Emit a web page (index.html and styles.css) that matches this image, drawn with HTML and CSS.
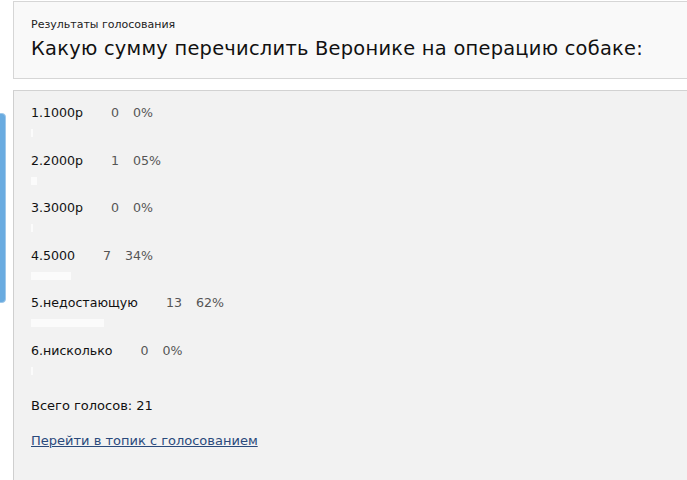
FILE: index.html
```html
<!DOCTYPE html>
<html lang="ru">
<head>
<meta charset="utf-8">
<title>Результаты голосования</title>
<link rel="stylesheet" href="styles.css">
</head>
<body>
<div class="side-tab"></div>
<div class="page">
  <header class="poll-head">
    <div class="poll-kicker">Результаты голосования</div>
    <h1 class="poll-title">Какую сумму перечислить Веронике на операцию собаке:</h1>
  </header>
  <section class="poll-body">
    <ul class="results">
      <li class="result">
        <div class="result-line"><span class="label">1.1000р</span><span class="count">0</span><span class="pct">0%</span></div>
        <div class="bar" style="width:2px"></div>
      </li>
      <li class="result">
        <div class="result-line"><span class="label">2.2000р</span><span class="count">1</span><span class="pct">05%</span></div>
        <div class="bar" style="width:6px"></div>
      </li>
      <li class="result">
        <div class="result-line"><span class="label">3.3000р</span><span class="count">0</span><span class="pct">0%</span></div>
        <div class="bar" style="width:2px"></div>
      </li>
      <li class="result">
        <div class="result-line"><span class="label">4.5000</span><span class="count">7</span><span class="pct">34%</span></div>
        <div class="bar" style="width:40px"></div>
      </li>
      <li class="result">
        <div class="result-line"><span class="label">5.недостающую</span><span class="count">13</span><span class="pct">62%</span></div>
        <div class="bar" style="width:73px"></div>
      </li>
      <li class="result">
        <div class="result-line"><span class="label">6.нисколько</span><span class="count">0</span><span class="pct">0%</span></div>
        <div class="bar" style="width:2px"></div>
      </li>
    </ul>
    <p class="total">Всего голосов: 21</p>
    <a class="topic-link" href="#">Перейти в топик с голосованием</a>
  </section>
</div>
</body>
</html>
```
FILE: styles.css
```css
html, body {
  margin: 0;
  padding: 0;
  overflow: hidden;
  background: #ffffff;
}
body {
  font-family: "DejaVu Sans", Verdana, sans-serif;
  color: #1a1a1a;
  width: 687px;
  height: 480px;
  position: relative;
}
.page {
  padding: 1px 0 0 13px;
  width: 700px;
}
.poll-head {
  background: #f9f9f9;
  border: 1px solid #d6d6d6;
  border-right: none;
  height: 78px;
  padding: 0 0 0 17px;
  box-sizing: border-box;
}
.poll-kicker {
  font-size: 11px;
  line-height: 14px;
  padding-top: 16px;
  color: #222;
}
.poll-title {
  margin: 0;
  font-weight: normal;
  font-size: 19.4px;
  line-height: 24px;
  padding-top: 5px;
  color: #111;
  letter-spacing: 0.26px;
}
.poll-body {
  margin-top: 11px;
  background: #f2f2f2;
  border-top: 1px solid #d2d2d2;
  border-left: 1px solid #cfcfcf;
  height: 400px;
  padding: 14px 0 0 17px;
  box-sizing: border-box;
  font-size: 13px;
}
.results {
  list-style: none;
  margin: 0;
  padding: 0;
}
.result {
  height: 47.6px;
}
.result-line {
  display: flex;
  line-height: 16px;
  font-size: 12.6px;
}
.label {
  color: #111;
  margin-right: 28px;
}
.count {
  color: #555;
  margin-right: 14px;
}
.pct {
  color: #555;
}
.bar {
  margin-top: 8px;
  height: 8px;
  background: #fbfbfb;
}
.total {
  margin: 7px 0 0 0;
  line-height: 16px;
  color: #111;
}
.topic-link {
  display: inline-block;
  margin-top: 19px;
  line-height: 16px;
  color: #2a4a7c;
  text-decoration: underline;
}
.side-tab {
  position: absolute;
  left: -6px;
  top: 113px;
  width: 10px;
  height: 188px;
  background: #69abe0;
  border: 1px solid #9fc8ea;
  border-radius: 4px;
}
```
